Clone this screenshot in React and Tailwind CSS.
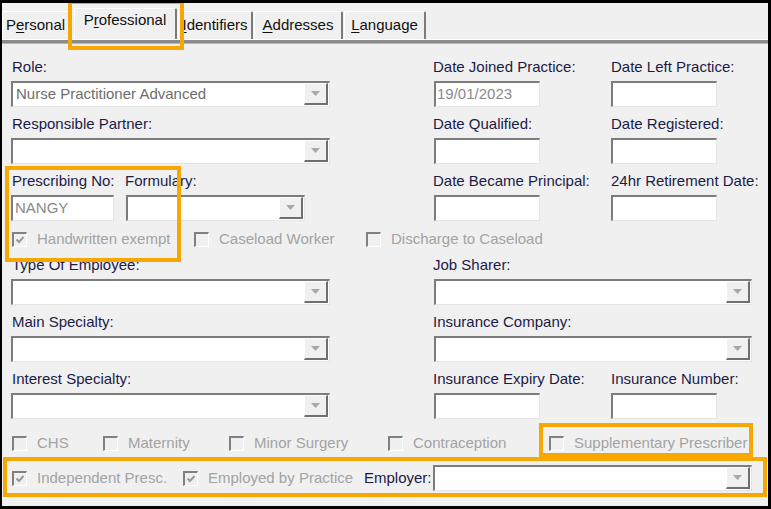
import React from 'react';

const labelCls = "text-[#1b1b48] leading-[16px] whitespace-nowrap";
const greyCls = "text-[#a3a3a3] leading-[16px] whitespace-nowrap";

const Field = ({ className = "", value = "", w }) => (
  <div
    className={`h-[26px] bg-white border-t-2 border-l-2 border-r border-b border-t-[#7c7c7c] border-l-[#7c7c7c] border-r-[#e4e4e4] border-b-[#e4e4e4] flex items-center pl-[1px] text-[#8a8a8a] ${className}`}
    style={{ width: w }}
  >
    {value}
  </div>
);

const Dropdown = ({ className = "", value = "", w }) => (
  <div
    className={`h-[26px] bg-white border-t-2 border-l-2 border-r border-b border-t-[#7c7c7c] border-l-[#7c7c7c] border-r-[#e4e4e4] border-b-[#e4e4e4] flex items-stretch ${className}`}
    style={{ width: w }}
  >
    <div className="flex-1 flex items-center pl-[3px] text-[#6e6e6e] whitespace-nowrap overflow-hidden">{value}</div>
    <div className="w-[24px] mr-[1px] mb-[1px] bg-[#f0f0f0] border-t border-l border-t-white border-l-white border-r-2 border-b-2 border-r-[#6f6f6f] border-b-[#6f6f6f] flex items-center justify-center">
      <svg width="9" height="5" viewBox="0 0 9 5">
        <path d="M0 0h9L4.5 5z" fill="#a8a8a8" />
      </svg>
    </div>
  </div>
);

const Check = ({ checked, label, w }) => (
  <div className="flex items-center h-[16px]" style={{ width: w }}>
    <div className="w-[15px] h-[15px] shrink-0 bg-[#f0f0f0] border-t-2 border-l-2 border-r border-b border-t-[#808080] border-l-[#808080] border-r-white border-b-white flex items-center justify-center">
      {checked && (
        <svg width="10" height="10" viewBox="0 0 10 10">
          <path d="M1.5 4.5 L4 7 L8.5 2" stroke="#9a9a9a" strokeWidth="2" fill="none" />
        </svg>
      )}
    </div>
    <span className={`${greyCls} ml-[10px]`}>{label}</span>
  </div>
);

const Tab = ({ label, u, active, w, className = "" }) => {
  const before = label.slice(0, u);
  const ch = label.charAt(u);
  const after = label.slice(u + 1);
  return (
    <div
      className={`shrink-0 bg-[#f0f0f0] border-t border-l border-t-white border-l-white border-r-2 border-r-[#7a7a7a] rounded-t-[2px] flex justify-center text-[#111] ${
        active ? "h-[31px] pt-[3px]" : "h-[28px] pt-[5px]"
      } ${className}`}
      style={{ width: w }}
    >
      <span className="leading-[16px]">
        {before}
        <span className="underline underline-offset-2">{ch}</span>
        {after}
      </span>
    </div>
  );
};

const Orange = ({ x, y, w, h }) => (
  <div
    className="absolute border-[4px] border-[#f6a800] pointer-events-none"
    style={{ left: x - 2, top: y - 3, width: w, height: h }}
  />
);

export default function App() {
  return (
    <div className="relative w-[771px] h-[509px] overflow-hidden bg-[#f0f0f0] border-t-[3px] border-l-[2px] border-r-[3px] border-b-[3px] border-black font-['Liberation_Sans',Arial,sans-serif] text-[15px]">
      {/* tabs */}
      <div className="flex items-end h-[36px]">
        <Tab label="Personal" u={1} w={68} />
        <Tab label="Professional" u={1} w={103} active className="ml-[4px]" />
        <Tab label="Identifiers" u={0} w={75} className="ml-[1px]" />
        <Tab label="Addresses" u={0} w={89} className="ml-[1px]" />
        <Tab label="Language" u={0} w={82} className="ml-[1px]" />
      </div>
      <div className="h-[1px] bg-white" />
      <div className="h-[4px] bg-[#8b8b8b] border-b border-b-[#b5b5b5]" />

      {/* form */}
      <div className="pl-[9px] flex flex-col">
        {/* row A */}
        <div className="flex mt-[15px]">
          <div className="w-[319px]">
            <div className={`${labelCls} pl-[1px]`}>Role:</div>
            <Dropdown className="mt-[6px]" w={319} value="Nurse Practitioner Advanced" />
          </div>
          <div className="ml-[103px] w-[178px]">
            <div className={labelCls}>Date Joined Practice:</div>
            <Field className="mt-[6px] ml-[1px]" w={106} value="19/01/2023" />
          </div>
          <div>
            <div className={labelCls}>Date Left Practice:</div>
            <Field className="mt-[6px]" w={106} />
          </div>
        </div>

        {/* row B */}
        <div className="flex mt-[9px]">
          <div className="w-[319px]">
            <div className={`${labelCls} pl-[1px]`}>Responsible Partner:</div>
            <Dropdown className="mt-[6px]" w={319} />
          </div>
          <div className="ml-[103px] w-[178px]">
            <div className={labelCls}>Date Qualified:</div>
            <Field className="mt-[6px] ml-[1px]" w={106} />
          </div>
          <div>
            <div className={labelCls}>Date Registered:</div>
            <Field className="mt-[6px]" w={106} />
          </div>
        </div>

        {/* row C */}
        <div className="flex mt-[9px]">
          <div className="w-[319px] flex">
            <div className="w-[114px]">
              <div className={`${labelCls} pl-[1px]`}>Prescribing No:</div>
              <Field className="mt-[6px] pl-[2px]" w={103} value="NANGY" />
            </div>
            <div>
              <div className={labelCls}>Formulary:</div>
              <Dropdown className="mt-[6px] ml-[1px]" w={179} />
            </div>
          </div>
          <div className="ml-[103px] w-[178px]">
            <div className={labelCls}>Date Became Principal:</div>
            <Field className="mt-[6px] ml-[1px]" w={106} />
          </div>
          <div>
            <div className={labelCls}>24hr Retirement Date:</div>
            <Field className="mt-[6px]" w={106} />
          </div>
        </div>

        {/* checks 1 */}
        <div className="flex mt-[10px] pl-[1px]">
          <Check checked label="Handwritten exempt" w={182} />
          <Check label="Caseload Worker" w={172} />
          <Check label="Discharge to Caseload" />
        </div>

        {/* row D */}
        <div className="flex mt-[10px]">
          <div className="w-[319px]">
            <div className={`${labelCls} pl-[1px]`}>Type Of Employee:</div>
            <Dropdown className="mt-[6px]" w={319} />
          </div>
          <div className="ml-[103px]">
            <div className={labelCls}>Job Sharer:</div>
            <Dropdown className="mt-[6px] ml-[1px]" w={318} />
          </div>
        </div>

        {/* row E */}
        <div className="flex mt-[9px]">
          <div className="w-[319px]">
            <div className={`${labelCls} pl-[1px]`}>Main Specialty:</div>
            <Dropdown className="mt-[6px]" w={319} />
          </div>
          <div className="ml-[103px]">
            <div className={labelCls}>Insurance Company:</div>
            <Dropdown className="mt-[6px] ml-[1px]" w={318} />
          </div>
        </div>

        {/* row F */}
        <div className="flex mt-[9px]">
          <div className="w-[319px]">
            <div className={`${labelCls} pl-[1px]`}>Interest Specialty:</div>
            <Dropdown className="mt-[6px]" w={319} />
          </div>
          <div className="ml-[103px] w-[178px]">
            <div className={labelCls}>Insurance Expiry Date:</div>
            <Field className="mt-[6px] ml-[1px]" w={106} />
          </div>
          <div>
            <div className={labelCls}>Insurance Number:</div>
            <Field className="mt-[6px]" w={106} />
          </div>
        </div>

        {/* checks 2 */}
        <div className="flex mt-[16px] pl-[1px]">
          <Check label="CHS" w={91} />
          <Check label="Maternity" w={126} />
          <Check label="Minor Surgery" w={159} />
          <Check label="Contraception" w={161} />
          <Check label="Supplementary Prescriber" />
        </div>

        {/* bottom row */}
        <div className="flex items-center mt-[14px] pl-[1px]">
          <Check checked label="Independent Presc." w={171} />
          <Check checked label="Employed by Practice" w={181} />
          <span className={`${labelCls} mr-[1px]`}>Employer:</span>
          <Dropdown w={319} />
        </div>
      </div>

      {/* highlight annotations */}
      <Orange x={68} y={0} w={116} h={50} />
      <Orange x={5} y={166} w={176} h={96} />
      <Orange x={539} y={423} w={214} h={34} />
      <Orange x={3} y={457} w={764} h={40} />
    </div>
  );
}
